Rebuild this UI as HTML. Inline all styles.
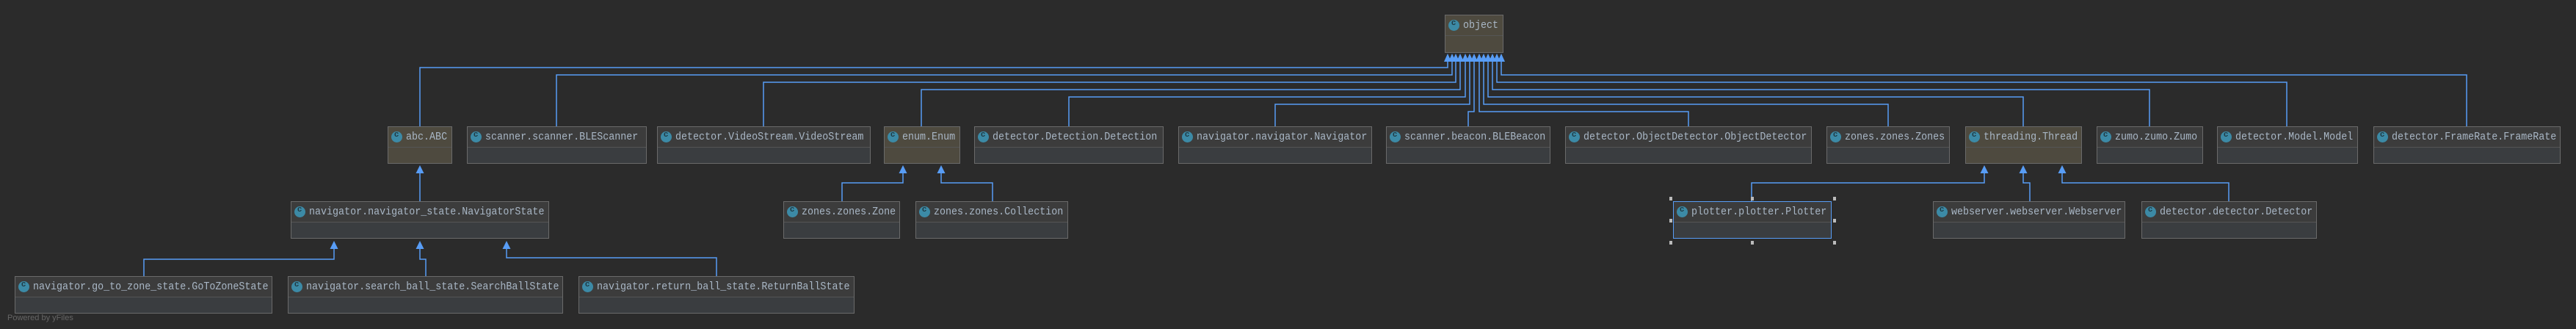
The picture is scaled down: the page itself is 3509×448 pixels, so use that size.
<!DOCTYPE html>
<html><head><meta charset="utf-8"><style>
html,body{margin:0;padding:0;background:#2b2b2b;width:3509px;height:448px;overflow:hidden;position:relative;font-family:"Liberation Mono",monospace;}
.b{position:absolute;box-sizing:border-box;border:1px solid #6a6a6a;background:#3a3d40;}
.b .h{height:27px;border-bottom:1px solid #555;background:#3c3c3c;position:relative;}
.b.br,.b.br .h{background:#4e4a3f;}
.b .h i{position:absolute;left:4px;top:6px;width:15px;height:15px;border-radius:50%;background:#3c8aa6;}
.b .h i:after{content:"c";position:absolute;left:4px;top:-2px;font-style:normal;font-size:11px;color:#1f3a44;font-family:"Liberation Sans",sans-serif;font-weight:bold;}
.b .h span{position:absolute;left:24px;top:6px;font-size:15px;line-height:16px;color:#a9b7c6;white-space:nowrap;transform:scaleX(0.89);transform-origin:0 0;}
.sel{border-color:#589df6;}
.hd{position:absolute;width:4px;height:5px;background:#bbb;}
svg{position:absolute;left:0;top:0;}
.pw{position:absolute;left:10px;top:427px;font-family:"Liberation Sans",sans-serif;font-size:11px;color:#666;}
</style></head><body>
<svg width="3509" height="448" fill="none" stroke="#589df6" stroke-width="1.5">
<path d="M1972 84V92H572V172M1978 84V102H758V172M1983 84V112H1040V172M1989 84V122H1255V172M1996 84V132H1456V172M2002 84V142H1737V172M2008 84V152H2000V172M2015 84V152H2300V172M2021 84V142H2572V172M2027 84V132H2756V172M2033 84V122H2928V172M2039 84V112H3115V172M2045 84V102H3360V172"/>
<path d="M572 236V274M1230 236V249H1147V274M1282 236V249H1352V274M2703 236V249H2386V274M2756 236V249H2765V274M2809 236V249H3036V274"/>
<path d="M455 339V353H196V376M572 339V353H580V376M690 339V351H976V376"/>
<g fill="#589df6" stroke="none">
<path d="M1972 73l5 11h-10zM1978 73l5 11h-10zM1983 73l5 11h-10zM1989 73l5 11h-10zM1996 73l5 11h-10zM2002 73l5 11h-10zM2008 73l5 11h-10zM2015 73l5 11h-10zM2021 73l5 11h-10zM2027 73l5 11h-10zM2033 73l5 11h-10zM2039 73l5 11h-10zM2045 73l5 11h-10z"/>
<path d="M572 225l5.5 11h-11zM1230 225l5.5 11h-11zM1282 225l5.5 11h-11zM2703 225l5.5 11h-11zM2756 225l5.5 11h-11zM2809 225l5.5 11h-11z"/>
<path d="M455 328l5.5 11h-11zM572 328l5.5 11h-11zM690 328l5.5 11h-11z"/>
</g>
</svg>

<div class="b br" style="left:1968px;top:20px;width:80px;height:52px"><div class="h"><i></i><span>object</span></div></div>

<div class="b br" style="left:528px;top:172px;width:88px;height:51px"><div class="h"><i></i><span>abc.ABC</span></div></div>
<div class="b" style="left:636px;top:172px;width:245px;height:51px"><div class="h"><i></i><span>scanner.scanner.BLEScanner</span></div></div>
<div class="b" style="left:895px;top:172px;width:291px;height:51px"><div class="h"><i></i><span>detector.VideoStream.VideoStream</span></div></div>
<div class="b br" style="left:1204px;top:172px;width:104px;height:51px"><div class="h"><i></i><span>enum.Enum</span></div></div>
<div class="b" style="left:1327px;top:172px;width:258px;height:51px"><div class="h"><i></i><span>detector.Detection.Detection</span></div></div>
<div class="b" style="left:1605px;top:172px;width:264px;height:51px"><div class="h"><i></i><span>navigator.navigator.Navigator</span></div></div>
<div class="b" style="left:1888px;top:172px;width:224px;height:51px"><div class="h"><i></i><span>scanner.beacon.BLEBeacon</span></div></div>
<div class="b" style="left:2132px;top:172px;width:336px;height:51px"><div class="h"><i></i><span>detector.ObjectDetector.ObjectDetector</span></div></div>
<div class="b" style="left:2488px;top:172px;width:168px;height:51px"><div class="h"><i></i><span>zones.zones.Zones</span></div></div>
<div class="b br" style="left:2677px;top:172px;width:159px;height:51px"><div class="h"><i></i><span>threading.Thread</span></div></div>
<div class="b" style="left:2856px;top:172px;width:145px;height:51px"><div class="h"><i></i><span>zumo.zumo.Zumo</span></div></div>
<div class="b" style="left:3020px;top:172px;width:192px;height:51px"><div class="h"><i></i><span>detector.Model.Model</span></div></div>
<div class="b" style="left:3233px;top:172px;width:255px;height:51px"><div class="h"><i></i><span>detector.FrameRate.FrameRate</span></div></div>

<div class="b" style="left:396px;top:274px;width:352px;height:51px"><div class="h"><i></i><span>navigator.navigator_state.NavigatorState</span></div></div>
<div class="b" style="left:1067px;top:274px;width:159px;height:51px"><div class="h"><i></i><span>zones.zones.Zone</span></div></div>
<div class="b" style="left:1247px;top:274px;width:208px;height:51px"><div class="h"><i></i><span>zones.zones.Collection</span></div></div>
<div class="b sel" style="left:2279px;top:274px;width:216px;height:51px"><div class="h"><i></i><span>plotter.plotter.Plotter</span></div></div>
<div class="b" style="left:2633px;top:274px;width:262px;height:51px"><div class="h"><i></i><span>webserver.webserver.Webserver</span></div></div>
<div class="b" style="left:2917px;top:274px;width:239px;height:51px"><div class="h"><i></i><span>detector.detector.Detector</span></div></div>

<div class="hd" style="left:2274px;top:268px"></div><div class="hd" style="left:2385px;top:268px"></div><div class="hd" style="left:2497px;top:268px"></div>
<div class="hd" style="left:2274px;top:298px"></div><div class="hd" style="left:2497px;top:298px"></div>
<div class="hd" style="left:2274px;top:328px"></div><div class="hd" style="left:2385px;top:328px"></div><div class="hd" style="left:2497px;top:328px"></div>

<div class="b" style="left:20px;top:376px;width:351px;height:51px"><div class="h"><i></i><span>navigator.go_to_zone_state.GoToZoneState</span></div></div>
<div class="b" style="left:392px;top:376px;width:375px;height:51px"><div class="h"><i></i><span>navigator.search_ball_state.SearchBallState</span></div></div>
<div class="b" style="left:788px;top:376px;width:376px;height:51px"><div class="h"><i></i><span>navigator.return_ball_state.ReturnBallState</span></div></div>

<div class="pw">Powered by yFiles</div>
</body></html>
